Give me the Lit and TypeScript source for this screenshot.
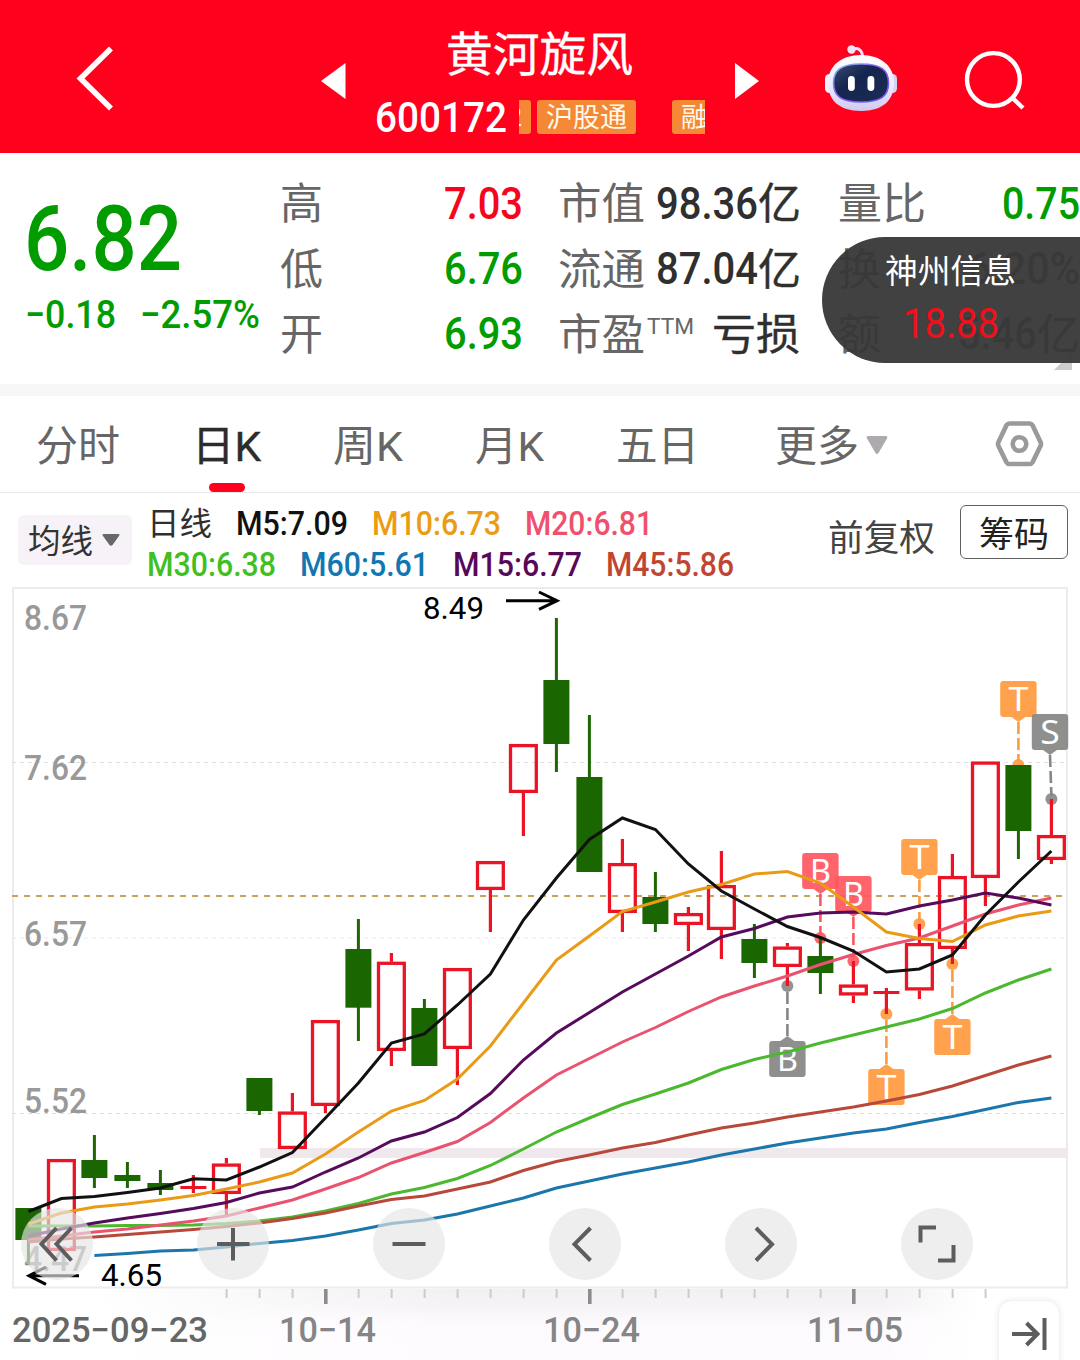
import { LitElement, html, svg, css } from "lit";
import { customElement } from "lit/decorators.js";

/** Real text set to an exact advance width; the box is as tall as the caps. */
const num = (text: string, width: number, cap: number, cls = "") => html`
  <svg class="txt ${cls}" width=${width} height=${cap}>
    <text y=${cap} font-size=${cap / 0.711} textLength=${width} lengthAdjust="spacingAndGlyphs">${text}</text>
  </svg>`;

/** The same for Chinese text; the box is one em tall. */
const han = (text: string, width: number, size: number, cls = "") => html`
  <svg class="txt han ${cls}" width=${width} height=${size}>
    <text y=${size * 0.88} font-size=${size} textLength=${width} lengthAdjust="spacingAndGlyphs">${text}</text>
  </svg>`;

const X0 = 28.4;
const STEP = 33;
const cx = (i: number) => X0 + STEP * i;

type Candle = [up: number, high: number, top: number, bottom: number, low: number];
const CANDLES: Candle[] = [
  [0, 1208, 1208, 1240, 1265], [1, 1159, 1159, 1251, 1251], [0, 1135, 1160, 1178, 1188],
  [0, 1162, 1175, 1181, 1188], [0, 1170, 1183, 1190, 1195], [1, 1175, 1186, 1189, 1193],
  [1, 1158, 1163.5, 1194, 1215], [0, 1078, 1078, 1111, 1115], [1, 1093, 1111.5, 1149, 1149],
  [1, 1020, 1020, 1106, 1113], [0, 919, 949, 1007.7, 1041], [1, 953, 961.7, 1051, 1066],
  [0, 999, 1008, 1066, 1066], [1, 968, 968, 1049, 1085], [1, 861, 861, 890, 932],
  [1, 744, 744, 793, 836], [0, 618, 680, 744, 772], [0, 715, 777, 872, 872],
  [1, 839, 863, 913, 932], [0, 872, 897, 924, 932], [1, 907, 913, 925, 951],
  [1, 851, 885, 930, 959], [0, 924, 939, 963, 978], [1, 943, 946.5, 967, 986],
  [0, 938, 956, 973, 994], [1, 961, 984.5, 995.5, 1003], [1, 988, 991, 994, 1014],
  [1, 924, 943, 990.5, 999], [1, 854, 876, 949, 964], [1, 761.5, 761.5, 878, 906],
  [0, 765, 765, 831, 859], [1, 799, 835, 860, 864],
];

const AVERAGES: { color: string; from: number; y: number[] }[] = [
  { color: "#1b77ab", from: 2, y: [1255.5, 1253.5, 1251, 1250, 1247, 1243.5, 1240.5, 1236, 1230, 1223.5, 1220, 1214, 1206, 1198, 1188, 1181, 1174, 1168, 1162, 1155, 1149, 1143, 1138, 1133, 1129, 1122.5, 1116.5, 1109.5, 1102.5, 1098] },
  { color: "#4cb82f", from: 0, y: [1226, 1226, 1226, 1225.5, 1225.5, 1225, 1223.5, 1221, 1217, 1211, 1203.5, 1194, 1187.5, 1178.5, 1165.5, 1149, 1132, 1118, 1104.5, 1094, 1083, 1069.5, 1059.5, 1052, 1043, 1035, 1027, 1019, 1008.5, 993, 980, 969] },
  { color: "#e9536f", from: 0, y: [1240, 1236, 1232, 1229, 1225, 1221, 1216, 1208, 1200, 1189, 1177.5, 1163, 1152.5, 1141.5, 1122.5, 1098, 1075, 1058.5, 1042, 1027.5, 1011.5, 997, 986, 976, 964.5, 954.5, 945.5, 938, 926, 914, 905, 898] },
  { color: "#b8493a", from: 0, y: [1242, 1239, 1237, 1234.5, 1232, 1229.5, 1226.5, 1223, 1218.5, 1213, 1206, 1199.5, 1196, 1189, 1182, 1170.5, 1161.5, 1155, 1148, 1142.5, 1135, 1128, 1123, 1117, 1112, 1107, 1101, 1094.5, 1086, 1075.5, 1065, 1056] },
  { color: "#560b5c", from: 0, y: [1236, 1229, 1223, 1218, 1213.5, 1208.5, 1202.5, 1193, 1187, 1172, 1158, 1141, 1132, 1117.5, 1093.5, 1060, 1033, 1012.5, 992, 974, 956, 937, 928.5, 917, 913, 912, 914, 906, 900, 893, 898, 905] },
  { color: "#e99b17", from: 0, y: [1224, 1213, 1207, 1204, 1200, 1195.5, 1189, 1182, 1173, 1154, 1132, 1111, 1100.5, 1079, 1046, 1003, 960, 936, 911.5, 902, 892, 884.5, 874, 871.5, 883, 907, 932, 938.5, 941.5, 925, 916, 911] },
  { color: "#111", from: 0, y: [1211.5, 1198.5, 1196.5, 1192.5, 1188, 1178.7, 1180, 1167, 1152.5, 1118, 1083, 1043, 1034, 1005, 974, 920, 878, 839.5, 818, 829.5, 864, 891, 909, 926.5, 937.5, 951, 972, 969, 955, 915, 882, 851] },
];

type Marker = { letter: string; color: string; x: number; top: number; dot: number; dx?: number };
const ORANGE = "#ff9a3e", PINK = "#ff5660", GRAY = "#868785";
const MARKERS: Marker[] = [
  { letter: "T", color: ORANGE, x: 1018.4, top: 681, dot: 765 },
  { letter: "S", color: GRAY, x: 1050, top: 714, dot: 799, dx: 1.4 },
  { letter: "B", color: PINK, x: 820.4, top: 853, dot: 938 },
  { letter: "B", color: PINK, x: 853.4, top: 876, dot: 961 },
  { letter: "T", color: ORANGE, x: 919.4, top: 839, dot: 924 },
  { letter: "B", color: GRAY, x: 787.4, top: 1041, dot: 986 },
  { letter: "T", color: ORANGE, x: 886.4, top: 1069, dot: 1014 },
  { letter: "T", color: ORANGE, x: 952.4, top: 1019, dot: 964 },
];

const LETTER_W: Record<string, number> = { T: 20, B: 21, S: 19.5 };

@customElement("price-chart")
export class PriceChart extends LitElement {
  static styles = css`
    :host { display: block; width: 1080px; height: 780px; }
    svg { display: block; font-family: Roboto, "Liberation Sans", sans-serif; }
    .scale { fill: #999; font-weight: 500; }
    .date { fill: #858585; font-weight: 500; }
    .first { fill: #666; }
    .mark { fill: #fff; font-family: "Noto Sans", "Open Sans", sans-serif; }
  `;

  private label(text: string, x: number, base: number, width: number, cap: number, cls = "") {
    return svg`<text class=${cls} x=${x} y=${base} font-size=${cap / 0.711} textLength=${width}
      lengthAdjust="spacingAndGlyphs">${text}</text>`;
  }

  private candle([up, high, top, bottom, low]: Candle, i: number) {
    const x = cx(i);
    if (!up) {
      return svg`<path d="M${x} ${high}V${low}" stroke="#1d6603" stroke-width="3"/>
        <rect x=${x - 13} y=${top} width="26" height=${bottom - top} fill="#1a6600"/>`;
    }
    const body = bottom - top > 4
      ? svg`<rect x=${x - 12.9} y=${top + 1.6} width="25.8" height=${bottom - top - 3.2} fill="none"
          stroke="#ea1425" stroke-width="3.3"/>`
      : svg`<path d="M${x - 13} ${(top + bottom) / 2}h26" stroke="#ea1425" stroke-width="3"/>`;
    return svg`<path d="M${x} ${high}V${top}M${x} ${bottom}V${low}" stroke="#ea1425" stroke-width="3.2"/>${body}`;
  }

  private leader(m: Marker) {
    const above = m.top < m.dot;
    const end = m.x + (m.dx ?? 0);
    return svg`<circle cx=${end} cy=${m.dot} r="6" fill=${m.color} opacity=".9"/>
      <path d="M${m.x} ${above ? m.top + 41 : m.top - 5}L${end} ${above ? m.dot - 3 : m.dot + 5}"
        stroke=${m.color} stroke-width="2.6" stroke-dasharray="12 4"/>`;
  }

  private flag(m: Marker) {
    const above = m.top < m.dot;
    const edge = above ? m.top + 36 : m.top;
    const w = LETTER_W[m.letter];
    return svg`<g>
      <g opacity=".92" fill=${m.color}>
        <rect x=${m.x - 18.2} y=${m.top} width="36.4" height="36" rx="3"/>
        <path d="M${m.x - 7} ${edge}h14l-7 ${above ? 5 : -5}z"/>
      </g>
      <text class="mark" x=${m.x - w / 2} y=${m.top + 30} font-size="32" textLength=${w}
        lengthAdjust="spacingAndGlyphs">${m.letter}</text>
    </g>`;
  }

  render() {
    const minor = Array.from({ length: 24 }, (_, k) => k + 6).filter((i) => ![9, 17, 25].includes(i));
    return html`<svg width="1080" height="780" viewBox="0 580 1080 780">
      <defs>
        <linearGradient id="haze" x1="0" y1="0" x2="0" y2="1">
          <stop offset="0" stop-color="#f2f1f2"/><stop offset=".25" stop-color="#f6f3f6"/>
          <stop offset=".48" stop-color="#fdfafd"/><stop offset="1" stop-color="#fefbfe"/>
        </linearGradient>
        <linearGradient id="side"><stop offset="0" stop-color="#fff"/><stop offset="1" stop-color="#fff" stop-opacity="0"/></linearGradient>
      </defs>
      <rect x="97" y="1289" width="880" height="71" fill="url(#haze)"/>
      <rect x="97" y="1289" width="360" height="71" fill="url(#side)"/>
      <rect x="880" y="1289" width="97" height="71" fill="url(#side)" transform="rotate(180 928.5 1324.5)"/>
      <rect x="13" y="588" width="1054" height="699.5" fill="none" stroke="#ececec" stroke-width="2"/>
      <rect x="260" y="1148" width="808" height="10" fill="#efe9ee"/>
      <g stroke-dasharray="4 4" stroke="#dedede" stroke-width="1.2">
        <path d="M12 762.5H1066M12 1113.5H1066"/><path d="M12 938H1066" stroke="#e8e8e8"/>
      </g>
      <path d="M12 896H1062" stroke="#c9a25f" stroke-width="2" stroke-dasharray="6 6"/>
      ${this.label("8.67", 24, 630, 63, 25.5, "scale")}
      ${this.label("7.62", 24, 780, 63, 25.5, "scale")}
      ${this.label("6.57", 24, 946, 63, 25.5, "scale")}
      ${this.label("5.52", 24, 1113, 63, 25.5, "scale")}
      ${this.label("4.47", 24, 1271, 63, 25.5, "scale")}
      ${this.label("8.49", 423, 619, 61, 22)}
      ${this.label("4.65", 101, 1286, 61, 22)}
      <g fill="none" stroke="#000" stroke-width="3">
        <path d="M506 600.7h50M539 592l18 8.7l-18 8.7"/>
        <path d="M79 1275.7h-50M46 1267l-17 8.7l17 8.7"/>
      </g>
      ${MARKERS.map((m) => this.leader(m))}
      ${CANDLES.map((c, i) => this.candle(c, i))}
      ${MARKERS.map((m) => this.flag(m))}
      ${AVERAGES.map((a) => svg`<polyline fill="none" stroke=${a.color} stroke-width="3"
        points=${a.y.map((y, k) => `${cx(k + a.from)},${y}`).join(" ")}/>`)}
      <path d=${minor.map((i) => `M${cx(i) + 0.2} 1289v9`).join("")} stroke="#ccc" stroke-width="2"/>
      <path d=${[9, 17, 25].map((i) => `M${cx(i) + 0.4} 1289v15`).join("")} stroke="#8c8c8c" stroke-width="3.6"/>
      ${this.label("2025−09−23", 12, 1342, 196, 25, "date first")}
      ${this.label("10−14", 279, 1342, 97, 25, "date")}
      ${this.label("10−24", 543, 1342, 97, 25, "date")}
      ${this.label("11−05", 807, 1342, 96, 25, "date")}
    </svg>`;
  }
}

@customElement("app-root")
export class AppRoot extends LitElement {
  static styles = css`
    :host {
      display: block; width: 1080px; height: 1360px; overflow: hidden; background: #fff; position: relative;
      font-family: Roboto, "Noto Sans CJK SC", sans-serif; color: #666;
    }
    svg { display: block; flex: none; }
    .txt { overflow: visible; fill: currentColor; font-weight: 500; }
    .han { font-weight: 400; font-family: Roboto, "Noto Sans CJK SC", sans-serif; }
    .thin { font-weight: 400; }
    .bold { stroke: currentColor; stroke-width: 0.4; }
    .icon { fill: none; stroke: #5d5d5d; stroke-width: 4; }

    header { height: 153px; background: #ff001d; display: flex; align-items: flex-start; color: #fff; }
    .back { margin: 46px 0 0 76px; }
    .prev { margin: 63px 0 0 208px; }
    .name { width: 330px; margin: 30px 0 0 29px; display: flex; flex-direction: column; }
    .title { margin-left: 71px; }
    .sub { display: flex; margin-top: 23px; align-items: center; height: 34px; }
    .tags { margin-left: 12px; width: 186px; display: flex; overflow: hidden; }
    .tag { height: 34px; background: #f58835; border-radius: 3px; display: flex; align-items: center; flex: none; box-sizing: border-box; color: #fffaee; }
    .tag-cut { width: 32px; margin-left: -20px; margin-right: 6px; padding-left: 9px; }
    .tag-hgt { width: 99px; padding-left: 9px; margin-right: 36px; }
    .tag-rz { width: 99px; padding-left: 9px; }
    .next { margin: 63px 0 0 30px; }
    .robot { margin: 44px 0 0 64px; }
    .search { margin: 48px 0 0 66px; }

    .quote { height: 231px; display: flex; position: relative; }
    .price { width: 256px; padding: 51.5px 0 0 24px; color: #009c00; }
    .change { display: flex; gap: 24px; margin: 31px 0 0 1px; }
    .col { width: 243px; padding-top: 17px; }
    .col + .col { margin-left: 35.5px; }
    .col.edge { width: 242px; margin-left: 37px; }
    .row { height: 65.4px; display: flex; align-items: center; justify-content: space-between; }
    .pair { display: flex; align-items: center; }
    .ttm { margin: -14px 0 0 2px; }
    .loss { margin-right: 1.5px; }
    .up { color: #f5061d; }
    .down { color: #009c00; }
    .dark { color: #2f2f2f; }
    .fold { position: absolute; left: 1054px; top: 199px; }
    .float {
      position: absolute; right: 0; top: 84px; width: 258px; height: 126px; box-sizing: border-box;
      border-radius: 63px 0 0 63px; background: rgba(55, 55, 55, 0.95); color: #fff;
      padding: 17px 0 0 63px; display: flex; flex-direction: column;
    }
    .float .alert { margin: 20.5px 0 0 18px; color: #f0101c; }

    .band { height: 12px; background: #f7f7f7; }
    nav { height: 96px; border-bottom: 1px solid #e8e8e8; display: flex; padding-left: 35.5px; }
    .tab { display: flex; align-items: center; height: 98px; position: relative; margin-right: 72px; }
    .tab.wide { margin-right: 76px; }
    .tab.last { margin-right: 107px; gap: 7px; }
    .active { color: #2c2c2c; }
    .active::after {
      content: ""; position: absolute; left: 17.5px; bottom: 2px; width: 36px; height: 9px; border-radius: 4.5px; background: #ff001d;
    }
    .settings { margin-top: 24px; }

    .legend { height: 87px; display: flex; align-items: flex-start; }
    .picker {
      margin: 22px 0 0 18px; width: 114px; height: 50px; border-radius: 6px; background: #f6f2f7; box-sizing: border-box;
      display: flex; align-items: center; gap: 9px; padding: 0 0 0 10px; color: #333;
    }
    .lines { width: 681px; margin-left: 15px; }
    .line { display: flex; align-items: center; height: 41px; gap: 24px; }
    .line:first-child { margin-top: 9.5px; }
    .m5 { color: #111; }
    .m10 { color: #ec9c12; }
    .m20 { color: #f04f6d; }
    .m30 { color: #41bf1f; }
    .m60 { color: #1277b0; }
    .m15 { color: #580859; }
    .m45 { color: #bf4631; }
    .adjust { margin-top: 26px; color: #444; }
    .chips {
      margin: 12px 0 0 25px; width: 108px; height: 54px; border: 1.5px solid #606060; border-radius: 6px; box-sizing: border-box;
      display: flex; align-items: center; justify-content: center; color: #222; padding-top: 3px;
    }

    .stage { position: relative; }
    .tools { position: absolute; left: 21px; top: 628px; display: flex; gap: 104px; }
    .tool { width: 72px; height: 72px; border-radius: 50%; background: rgba(229, 229, 229, 0.66); }
    .jump {
      position: absolute; left: 998px; top: 720px; width: 62px; height: 76px; box-sizing: border-box; border-radius: 14px;
      background: #fff; border: 1px solid #f5f0f5; box-shadow: 0 0 5px 1px #f3eef3;
    }
  `;

  private tool(d: string) {
    return html`<div class="tool"><svg class="icon" width="72" height="72"><path d=${d}/></svg></div>`;
  }

  render() {
    return html`
      <header>
        <svg class="back" width="37" height="66" fill="none" stroke="#fff" stroke-width="5.6"><path d="M35 2.5L4.5 32.5L35 62.5"/></svg>
        <svg class="prev" width="25" height="36" fill="#fff"><path d="M0 18L24.500 0V36z"/></svg>
        <div class="name">
          <div class="title">${han("黄河旋风", 187, 46.5, "bold")}</div>
          <div class="sub">
            ${num("600172", 132, 30)}
            <div class="tags">
              <div class="tag tag-cut">${num("2", 14, 18, "thin")}</div>
              <div class="tag tag-hgt">${han("沪股通", 81, 27)}</div>
              <div class="tag tag-rz">${han("融", 27, 27)}</div>
            </div>
          </div>
        </div>
        <svg class="next" width="25" height="36" fill="#fff"><path d="M24 18L0 0V36z"/></svg>
        <svg class="robot" width="74" height="68" viewBox="824 44 74 68">
          <defs>
            <linearGradient id="shell" x1="0" y1="0" x2="0" y2="1"><stop offset="0" stop-color="#fff"/><stop offset=".55" stop-color="#ece9fd"/><stop offset="1" stop-color="#cfcbf0"/></linearGradient>
            <linearGradient id="rim" x1="0" y1="0" x2="1" y2="1"><stop offset="0" stop-color="#7fc6ee"/><stop offset=".5" stop-color="#8a55f0"/><stop offset="1" stop-color="#6a5cf4"/></linearGradient>
            <linearGradient id="face" x1="0" y1="0" x2="1" y2="1"><stop offset="0" stop-color="#3b4a72"/><stop offset=".4" stop-color="#14264f"/><stop offset="1" stop-color="#1b2c55"/></linearGradient>
          </defs>
          <path d="M852 49.500C858 47 862.500 50 862.500 57" fill="none" stroke="#f0dcf6" stroke-width="3"/>
          <circle cx="851.500" cy="49.500" r="4.200" fill="#f1e3fa"/>
          <rect x="825" y="74" width="10" height="19" rx="4.500" fill="#f4f2ff"/>
          <rect x="887" y="74" width="10" height="19" rx="4.500" fill="#d5d2f6"/>
          <path d="M861 55C881 55 894 66 894 83C894 100 883 111 861 111C839 111 828 100 828 83C828 66 841 55 861 55z" fill="url(#shell)"/>
          <path d="M861 64C881 64 888.500 70 888.500 83C888.500 96 881 102 861 102C841 102 833.500 96 833.500 83C833.500 70 841 64 861 64z" fill="url(#face)" stroke="url(#rim)" stroke-width="1.600"/>
          <rect x="848" y="76" width="6.800" height="15" rx="3.400" fill="#fff"/>
          <rect x="867.500" y="76" width="6.800" height="15" rx="3.400" fill="#fff"/>
        </svg>
        <svg class="search" width="64" height="64" viewBox="965 48 64 64" fill="none" stroke="#fff" stroke-width="4.400">
          <circle cx="994.400" cy="79.500" r="26.400"/><path d="M1013 97.500L1024 108"/>
        </svg>
      </header>

      <section class="quote">
        <div class="price">
          ${num("6.82", 158, 64.5)}
          <div class="change">${num("−0.18", 91, 28)}${num("−2.57%", 120, 28)}</div>
        </div>
        <div class="col">
          <div class="row">${han("高", 43, 43)}${num("7.03", 79, 32, "up")}</div>
          <div class="row">${han("低", 43, 43)}${num("6.76", 79, 32, "down")}</div>
          <div class="row">${han("开", 43, 43)}${num("6.93", 79, 32, "down")}</div>
        </div>
        <div class="col">
          <div class="row">${han("市值", 87, 43)}<span class="pair dark">${num("98.36", 102, 32)}${han("亿", 43, 43, "bold")}</span></div>
          <div class="row">${han("流通", 87, 43)}<span class="pair dark">${num("87.04", 102, 32)}${han("亿", 43, 43, "bold")}</span></div>
          <div class="row"><span class="pair">${han("市盈", 87, 43)}<span class="ttm">${num("TTM", 47, 16, "thin")}</span></span><span class="dark loss">${han("亏损", 88, 43, "bold")}</span></div>
        </div>
        <div class="col edge">
          <div class="row">${han("量比", 88, 43)}${num("0.75", 78, 32, "down")}</div>
          <div class="row">${han("换", 43, 43)}${num("6.20%", 112, 32)}</div>
          <div class="row">${han("额", 43, 43)}<span class="pair">${num("5.46", 79, 32)}${han("亿", 43, 43, "bold")}</span></div>
        </div>
        <svg class="fold" width="18" height="18"><path d="M18 0V18H0z" fill="#ccc"/></svg>
        <div class="float">
          ${han("神州信息", 131, 33)}
          <div class="alert">${num("18.88", 96, 30, "thin")}</div>
        </div>
      </section>
      <div class="band"></div>

      <nav>
        <div class="tab">${han("分时", 84, 42)}</div>
        <div class="tab active">${han("日K", 69, 41.5, "bold")}</div>
        <div class="tab">${han("周K", 70, 41.5)}</div>
        <div class="tab">${han("月K", 69, 41.5)}</div>
        <div class="tab wide">${han("五日", 83, 42)}</div>
        <div class="tab last">${han("更多", 84, 42)}
          <svg width="22" height="19"><path d="M2 0H20Q22 0 21 2.500L12.500 17Q11 19 9.500 17L1 2.500Q0 0 2 0z" fill="#aeaab0"/></svg>
        </div>
        <svg class="settings" width="50" height="48" viewBox="995.500 420 50 48" fill="none" stroke="#9a9a9a" stroke-width="4.600">
          <path d="M1010 423.500H1030Q1032 423.500 1033 425.200L1041 442Q1042 444 1041 446L1033 462.300Q1032 464 1030 464H1010Q1008 464 1007 462.300L999 446Q998 444 999 442L1007 425.200Q1008 423.500 1010 423.500z"/>
          <circle cx="1020" cy="444" r="6.800"/>
        </svg>
      </nav>

      <section class="legend">
        <div class="picker">${han("均线", 65, 32.5)}<svg width="18" height="12"><path d="M2 0H16Q18.500 0 17 2L10.500 11Q9 12.500 7.500 11L1 2Q-.5 0 2 0z" fill="#686868"/></svg></div>
        <div class="lines">
          <div class="line">
            <span class="dark">${han("日线", 65, 32)}</span>
            ${num("M5:7.09", 112, 23.5, "m5")}
            ${num("M10:6.73", 129, 23.5, "m10")}
            ${num("M20:6.81", 128, 23.5, "m20")}
          </div>
          <div class="line">
            ${num("M30:6.38", 129, 23.5, "m30")}
            ${num("M60:5.61", 129, 23.5, "m60")}
            ${num("M15:6.77", 129, 23.5, "m15")}
            ${num("M45:5.86", 128, 23.5, "m45")}
          </div>
        </div>
        <div class="adjust">${han("前复权", 107, 36)}</div>
        <div class="chips">${han("筹码", 70, 35)}</div>
      </section>

      <section class="stage">
        <price-chart></price-chart>
        <div class="tools">
          ${this.tool("M35.500 20L20.500 36L35.500 52.500M50.500 20L35.500 36L50.500 52.500")}
          ${this.tool("M36 20V52.500M20 36H52.500")}
          ${this.tool("M19.500 36H52.500")}
          ${this.tool("M41.500 20L25.500 36.200L41.500 52.500")}
          ${this.tool("M31 20L47 36.200L31 52.500")}
          ${this.tool("M35 19.500H19.500V34.500M37 52.500H52.500V37")}
        </div>
        <div class="jump">
          <svg class="icon" width="60" height="60"><path d="M13 33H38M27.500 22L38.500 33L27.500 44M45.500 17V49"/></svg>
        </div>
      </section>
    `;
  }
}
